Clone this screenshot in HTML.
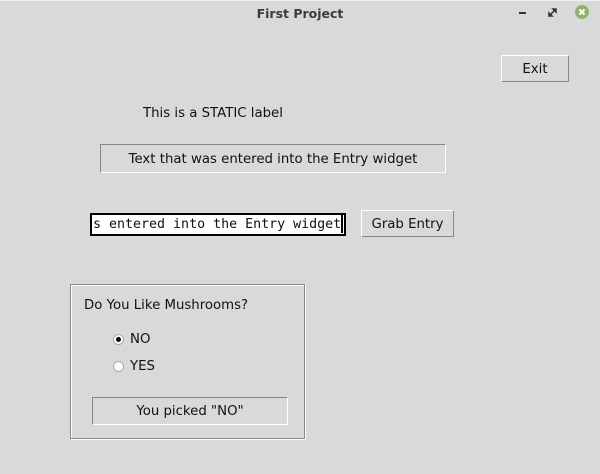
<!DOCTYPE html>
<html><head><meta charset="utf-8"><style>
html,body{margin:0;padding:0;}
body{width:600px;height:474px;background:#d9d9d9;position:relative;overflow:hidden;font-family:"DejaVu Sans","Liberation Sans",sans-serif;font-size:13.3px;color:#111;}
.a{position:absolute;box-sizing:border-box;}
.t{white-space:nowrap;}
.raised{border-top:1px solid #fff;border-left:1px solid #fff;border-right:1px solid #888;border-bottom:1px solid #888;display:flex;align-items:center;justify-content:center;}
.sunken{border-top:1px solid #888;border-left:1px solid #888;border-right:1px solid #fff;border-bottom:1px solid #fff;display:flex;align-items:center;justify-content:center;}
</style></head><body>
<div class="a" style="left:0;top:0;width:600px;height:1px;background:#f2f2f2"></div>
<div class="a t" style="left:0;width:600px;top:6px;text-align:center;font-weight:bold;font-size:12.5px;color:#3c3c3c">First Project</div>
<div class="a" style="left:519px;top:12px;width:7px;height:2px;background:#333"></div>
<svg class="a" style="left:548px;top:8px" width="9" height="9"><path d="M1 8 L1 5 L4 8 Z M8 1 L8 4 L5 1 Z M2 7 L7 2" stroke="#333" stroke-width="1.5" fill="#333"/></svg>
<div class="a" style="left:575px;top:5px;width:14px;height:14px;border-radius:50%;background:#8fb36a"></div>
<svg class="a" style="left:575px;top:5px" width="14" height="14"><path d="M4.5 4.5 L9.5 9.5 M9.5 4.5 L4.5 9.5" stroke="#fff" stroke-width="2"/></svg>

<div class="a raised" style="left:501px;top:55px;width:68px;height:27px;padding-top:1px">Exit</div>
<div class="a t" style="left:143px;top:106px">This is a STATIC label</div>
<div class="a sunken t" style="left:100px;top:144px;width:346px;height:29px;padding-top:1px">Text that was entered into the Entry widget</div>
<div class="a t" style="left:90px;top:213px;width:256px;height:23px;background:#fff;border:1px solid #000;outline:1px solid #000;outline-offset:-2px;font-family:'DejaVu Sans Mono','Liberation Mono',monospace;font-size:13.3px;padding:3px 0 0 2px;overflow:hidden">s entered into the Entry widget</div>
<div class="a" style="left:341px;top:215px;width:2px;height:18px;background:#000"></div>
<div class="a raised t" style="left:361px;top:210px;width:93px;height:27px;padding-top:1px">Grab Entry</div>

<div class="a" style="left:70px;top:284px;width:235px;height:155px;border:1px solid #888;box-shadow:inset 1px 1px 0 #fff,1px 1px 0 #fff"></div>
<div class="a t" style="left:84px;top:298px">Do You Like Mushrooms?</div>
<div class="a" style="left:113px;top:334px;width:11px;height:11px;border-radius:50%;background:#fff;border:1px solid #aaa;box-sizing:border-box"></div>
<div class="a" style="left:116px;top:337px;width:5px;height:5px;border-radius:50%;background:#000"></div>
<div class="a t" style="left:130px;top:332px">NO</div>
<div class="a" style="left:113px;top:361px;width:11px;height:11px;border-radius:50%;background:#fff;border:1px solid #aaa;box-sizing:border-box"></div>
<div class="a t" style="left:130px;top:359px">YES</div>
<div class="a sunken t" style="left:92px;top:397px;width:196px;height:28px;padding-top:1px">You picked "NO"</div>
</body></html>
